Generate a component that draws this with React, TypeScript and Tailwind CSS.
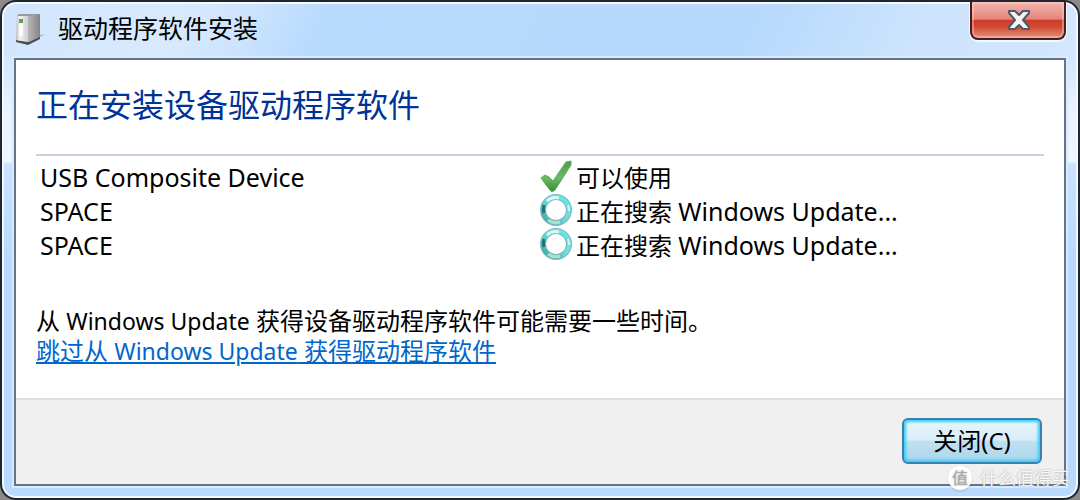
const devices = [
    { name: "USB Composite Device", status: "可以使用", source: "", done: true },
    { name: "SPACE", status: "正在搜索", source: "Windows Update...", done: false },
    { name: "SPACE", status: "正在搜索", source: "Windows Update...", done: false },
];

const DeviceIcon = () => (
    <svg width="32" height="34" viewBox="0 0 32 34" aria-hidden="true">
        <defs>
            <linearGradient id="side" x1="0" x2="1">
                <stop offset="0" stopColor="#dedede" />
                <stop offset="0.6" stopColor="#adadad" />
                <stop offset="1" stopColor="#858585" />
            </linearGradient>
            <linearGradient id="front" x1="0" x2="1">
                <stop offset="0" stopColor="#b9b9b9" />
                <stop offset="0.3" stopColor="#f2f2f2" />
                <stop offset="1" stopColor="#cfcfcf" />
            </linearGradient>
        </defs>
        <path d="M16 33 L31 23 L25 24 Z" fill="#8fa5bd" opacity="0.6" />
        <path d="M2 29 L2 31 L14 34 L26 28 L26 25 Z" fill="#4c4c4c" />
        <path d="M3 5 L5 3 L26 3 L26 26 L15 31 L2 29 Z" fill="url(#side)" />
        <path d="M3 5 L14 5 L14 31 L2 29 Z" fill="url(#front)" />
        <path d="M3 5 L5 3 L26 3 L14 5 Z" fill="#9a9a9a" />
        <path d="M5 8 H9 V25 H5 Z" fill="#fbfbfb" />
        <path d="M5 8 H9 V12 H5 Z" fill="#5fa04f" />
    </svg>
);

const CheckIcon = () => (
    <svg width="32" height="34" viewBox="0 0 32 34" aria-hidden="true">
        <defs>
            <linearGradient id="check" x1="0" y1="0" x2="0" y2="1">
                <stop offset="0" stopColor="#4f9a51" />
                <stop offset="0.55" stopColor="#6cba66" />
                <stop offset="1" stopColor="#2f8a36" />
            </linearGradient>
        </defs>
        <path
            d="M1 18 L5 15 L9 17 L13 21 L26 2 L31 1 L31 5 L15 30 L12 32 L9 29 Z"
            fill="url(#check)"
            stroke="#63a862"
            strokeWidth="1"
            strokeLinejoin="round"
        />
    </svg>
);

const SpinnerIcon = () => (
    <svg width="32" height="34" viewBox="0 0 32 34" aria-hidden="true">
        <defs>
            <linearGradient id="ring" x1="1" y1="0" x2="0" y2="1">
                <stop offset="0" stopColor="#5ce6ea" />
                <stop offset="0.45" stopColor="#6fdfe0" />
                <stop offset="1" stopColor="#3aa5a2" />
            </linearGradient>
        </defs>
        <circle cx="16" cy="16" r="13" fill="none" stroke="#86b5b7" strokeWidth="6" />
        <circle cx="16" cy="16" r="13" fill="none" stroke="url(#ring)" strokeWidth="4" />
        <path d="M7 7 A13 13 0 0 1 19 4" fill="none" stroke="#d4fafa" strokeWidth="3" />
        <path d="M28 11 A13 13 0 0 1 29 17" fill="none" stroke="#c4f6f6" strokeWidth="2" />
        <path d="M4 11 A13 13 0 0 0 4 19" fill="none" stroke="#14797f" strokeWidth="3" />
        <path d="M8 26 A13 13 0 0 0 20 28" fill="none" stroke="#a9e0d3" strokeWidth="3" />
    </svg>
);

const CloseIcon = () => (
    <svg width="24" height="22" viewBox="0 0 24 22" aria-hidden="true">
        <path
            d="M3 2 H9 L13 6 L17 2 H23 V4 L17 11 L23 18 V20 H17 L13 16 L9 20 H3 V18 L9 11 L3 4 Z"
            fill="#f4f4f4"
            stroke="#515869"
            strokeWidth="2"
            strokeLinejoin="round"
        />
    </svg>
);

const TitleBar = () => (
    <header className="flex h-14 items-start justify-between">
        <div className="flex items-center gap-3 pt-2">
            <DeviceIcon />
            <h1 className="text-[25px] leading-9 text-black">驱动程序软件安装</h1>
        </div>
        <button
            type="button"
            aria-label="关闭窗口"
            className="flex h-[38px] w-24 items-center justify-center rounded-b-lg border-2 border-t-0 border-[#4a1d1c] bg-[linear-gradient(to_bottom,#f4b4ae_0%,#e4857b_48%,#cb3a26_50%,#d24c35_70%,#e39279_100%)] inset-shadow-[0_0_0_2px_rgba(255,215,205,0.4)] shadow-[0_1px_0_1px_rgba(255,255,255,0.7)]"
        >
            <CloseIcon />
        </button>
    </header>
);

const DeviceTable = () => (
    <table aria-label="设备安装状态" className="w-full text-left text-2xl text-black">
        <tbody>
            {devices.map((device, i) => (
                <tr key={i}>
                    <th scope="row" className="w-1/2 py-0 pl-1 text-[25px] leading-8 font-normal">
                        {device.name}
                    </th>
                    <td className="p-0 leading-8">
                        <div className="flex items-center gap-1">
                            {device.done ? <CheckIcon /> : <SpinnerIcon />}
                            <span>
                                {device.status} <span className="text-[25px]">{device.source}</span>
                            </span>
                        </div>
                    </td>
                </tr>
            ))}
        </tbody>
    </table>
);

const Watermark = () => (
    <div className="pointer-events-none absolute right-2 bottom-2 flex items-center gap-2 text-lg leading-6 text-white/90 [text-shadow:0_0_2px_#999]">
        <span className="flex size-6 items-center justify-center rounded-full bg-white text-base text-[#aaaaaa] shadow-sm">值</span>
        <span>什么值得买</span>
    </div>
);

export default function App() {
    return (
        <div className="flex min-h-screen bg-[#8b8b8b] font-['Noto_Sans','Noto_Sans_CJK_SC',sans-serif]">
            <main className="relative flex flex-1 flex-col rounded-2xl border-2 border-[#20262e] bg-[linear-gradient(115deg,#d0e5fd_0%,#d9eafd_16%,#cfe5fd_22%,#b8dafd_30%,#b5d8fc_68%,#cde4fd_85%,#d3e7fe_100%),linear-gradient(to_bottom,#d5e8fd_0px,#d3e7fe_60px,#eaf3fe_110px,#edf5fe_160px,#c9e2fe_162px,#b8dafe_260px,#b8dafe_100%)] bg-[length:100%_56px,100%_100%] bg-no-repeat px-3 pb-3 inset-shadow-[0_0_0_2px_#f3f9ff]">
                <TitleBar />
                <section className="flex flex-1 flex-col border-2 border-[#617489] bg-white shadow-[0_0_0_2px_#dcebfb]">
                    <div className="flex-1 px-5 pt-5">
                        <h2 className="mb-1 border-b-2 border-[#c5d1df] pb-6 text-[32px] leading-[50px] text-[#003399]">
                            正在安装设备驱动程序软件
                        </h2>
                        <DeviceTable />
                        <p className="pt-11 text-2xl leading-[30px] text-black">
                            从 <span className="text-[23px]">Windows Update</span> 获得设备驱动程序软件可能需要一些时间。
                        </p>
                        <a href="#skip" className="block w-fit text-2xl leading-[30px] text-[#0066cc] underline decoration-2 underline-offset-2">
                            跳过从 <span className="text-[23px]">Windows Update</span> 获得驱动程序软件
                        </a>
                    </div>
                    <footer className="flex justify-end border-t-2 border-[#dfdfdf] bg-[#f0f0f0] px-[22px] pt-[18px] pb-5">
                        <button
                            type="button"
                            className="h-[46px] w-[140px] rounded-md border-2 border-[#3c7fb1] bg-[linear-gradient(to_bottom,#eaf5fb_0%,#d8edf8_48%,#c0e0f1_50%,#acd6ec_100%)] text-2xl text-black inset-shadow-[0_0_3px_2px_#2fd0fa]"
                        >
                            关闭(C)
                        </button>
                    </footer>
                </section>
                <Watermark />
            </main>
        </div>
    );
}
